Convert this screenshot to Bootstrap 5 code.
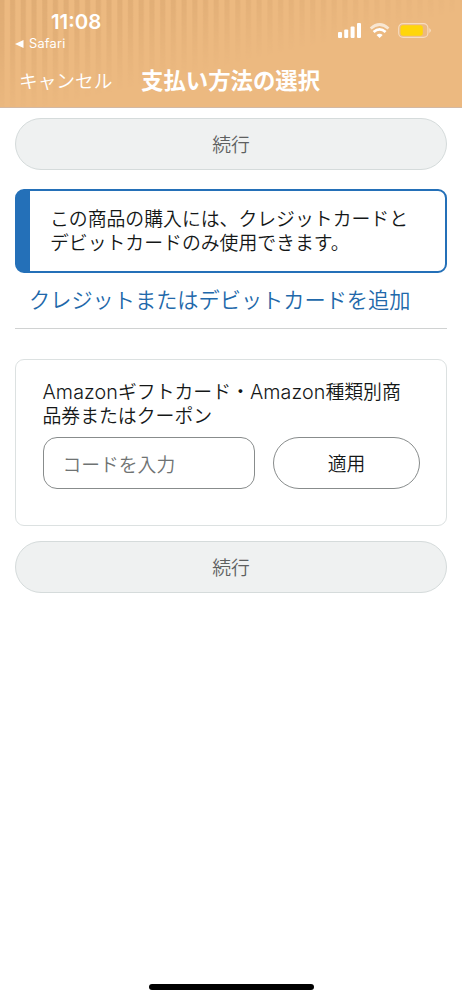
<!DOCTYPE html>
<html lang="ja">
<head>
<meta charset="utf-8">
<meta name="viewport" content="width=device-width, initial-scale=1">
<title>支払い方法の選択</title>
<link href="https://cdn.jsdelivr.net/npm/bootstrap@5.3.0/dist/css/bootstrap.min.css" rel="stylesheet">
<style>
body{font-family:Inter,"Noto Sans CJK JP",sans-serif;color:#141717;font-size:18.85px;line-height:24px;font-weight:350;min-height:999px}
.app-header{height:108px;background:#ecb980;border-bottom:1px solid #d3b8a3;color:#fff;position:relative}
.stripes{position:absolute;inset:0;background:repeating-linear-gradient(90deg,#dfac74 0 3.6px,transparent 5.2px 9.4px,#dfac74 10.72px);-webkit-mask-image:linear-gradient(to bottom right,#000 0%,rgba(0,0,0,.75) 22%,transparent 55%);mask-image:linear-gradient(to bottom right,#000 0%,rgba(0,0,0,.75) 22%,transparent 55%)}
.status-bar{height:54px}
.clock{font-size:20.4px;line-height:24px;font-weight:600;padding:10px 0 0 51px;letter-spacing:0}
.back-app{font-size:12.8px;line-height:16px;font-weight:400;padding:2px 0 0 15px;gap:5px;letter-spacing:.2px}
.status-icons{padding:23px 31px 0 0;height:39px}
.title-bar{height:53px}
.cancel{font-size:18.7px;width:141px;padding-left:19px;font-weight:350;padding-top:3px}
.title-bar h1{font-size:22.4px;font-weight:700;line-height:28px}
.page{padding:10px 15px 0 15px}
.pill{height:52px;border-radius:26px;font-size:18.8px;font-weight:inherit;padding:3px 0 0;line-height:24px}
.pill-off,.pill-off:disabled{background:#eff1f1;border:1.3px solid #d5dbdb;color:#5d6060;opacity:1}
.notice{margin-top:19px;height:84px;border:2.6px solid #2470b8;border-left-width:15px;border-radius:9px;padding:17px 0 0 20px}
.add-card{margin-top:12px;height:44px;padding-left:14px;border-bottom:1px solid #d0d2d2;font-size:21.2px;line-height:30px}
.add-card a{color:#2168aa}
.gift{margin-top:30px;height:167px;border:1.5px solid #dce1e1;border-radius:9px;padding:21px 26px 0 26.5px}
.latin{font-size:19.7px;letter-spacing:.1px;line-height:1}
.gift .form-control{width:212px;height:52px;border:1px solid #888c8c;border-radius:14px;padding:4px 19px 0;font-size:18.8px;font-weight:350;color:#141717}
.gift .form-control::placeholder{color:#6f7373}
.code-row{margin-top:8px}
.apply{width:147px;border:1px solid #888c8c;color:#141717}
.second{margin-top:15px}
.home-bar{width:165px;height:6px;border-radius:3px;background:#000;margin-bottom:9.5px}
</style>
</head>
<body class="d-flex flex-column bg-white">
<header class="app-header">
  <div class="stripes"></div>
  <div class="position-relative">
    <div class="status-bar d-flex justify-content-between">
      <div>
        <div class="clock">11:08</div>
        <div class="back-app d-flex align-items-center"><svg width="9" height="8" viewBox="0 0 9 8"><path d="M0 4 8.5 0v8z" fill="#fff"/></svg><span>Safari</span></div>
      </div>
      <div class="status-icons d-flex">
        <svg width="94" height="16" viewBox="0 0 94 16">
          <g fill="#fff"><rect x="1" y="9" width="4" height="6" rx="1"/><rect x="7.2" y="6.5" width="4" height="8.5" rx="1"/><rect x="13.6" y="3.5" width="4" height="11.5" rx="1"/><rect x="20" y="0" width="4" height="15" rx="1"/></g>
          <g fill="none" stroke="#fff" stroke-width="2.7"><path d="M33.7 5.5Q42.6-2.5 51.5 5.5" opacity=".65"/><path d="M36.6 9.1Q42.6 3.7 48.6 9.1"/></g>
          <path d="M39.5 12Q42.6 9.5 45.7 12L42.6 15z" fill="#fff"/>
          <rect x="61.7" y=".6" width="29.2" height="13.8" rx="4.4" fill="none" stroke="#f6dcc0" stroke-width="1.1"/>
          <rect x="63.5" y="2.2" width="22.3" height="10.6" rx="2.7" fill="#ffd60a"/>
          <path d="M92.3 5q3.2 2.5 0 5z" fill="#f6dcc0"/>
        </svg>
      </div>
    </div>
    <div class="title-bar d-flex align-items-center">
      <span class="cancel">キャンセル</span>
      <h1 class="m-0">支払い方法の選択</h1>
    </div>
  </div>
</header>
<main class="page flex-grow-1">
  <button class="btn pill pill-off w-100 d-block" disabled>続行</button>
  <div class="notice">この商品の購入には、クレジットカードと<br>デビットカードのみ使用できます。</div>
  <div class="add-card"><a href="#" class="text-decoration-none">クレジットまたはデビットカードを追加</a></div>
  <section class="gift">
    <div class="text-nowrap"><span class="latin">Amazon</span>ギフトカード・<span class="latin">Amazon</span>種類別商<br>品券またはクーポン</div>
    <div class="code-row d-flex justify-content-between">
      <input class="form-control" type="text" placeholder="コードを入力">
      <button class="btn pill apply">適用</button>
    </div>
  </section>
  <button class="btn pill pill-off w-100 d-block second" disabled>続行</button>
</main>
<div class="home-bar mx-auto"></div>
<script src="https://cdn.jsdelivr.net/npm/bootstrap@5.3.0/dist/js/bootstrap.bundle.min.js"></script>
</body>
</html>
